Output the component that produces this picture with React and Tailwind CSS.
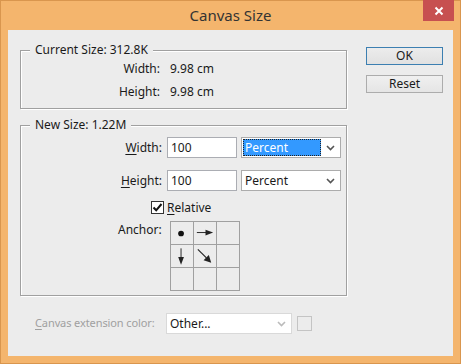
import React from 'react';

function Chevron({ color = '#555' }) {
  return (
    <svg width="9" height="6" viewBox="0 0 9 6" className="shrink-0">
      <path d="M1 1 L4.5 4.5 L8 1" fill="none" stroke={color} strokeWidth="1.6" />
    </svg>
  );
}

function Select({ value, focused, disabled }) {
  return (
    <div
      className={`h-[21px] flex items-center bg-white border ${
        disabled ? 'border-[#d9d9d9] w-[126px]' : 'border-[#acacac] w-[100px]'
      }`}
    >
      {focused ? (
        <div className="ml-[1px] h-[17px] w-[78px] bg-[#3399ff] text-white flex items-center pl-[2px] outline outline-1 outline-dotted outline-[#222] -outline-offset-1">
          {value}
        </div>
      ) : (
        <div className="flex-1 pl-[3px] text-[#1a1a1a]">{value}</div>
      )}
      <div className="ml-auto mr-[5px] flex items-center">
        <Chevron color={disabled ? '#bbb' : '#555'} />
      </div>
    </div>
  );
}

function Arrow({ dir }) {
  if (dir === 'dot') {
    return (
      <svg width="23" height="23" viewBox="0 0 23 23">
        <circle cx="10.5" cy="11.5" r="3" fill="#111" />
      </svg>
    );
  }
  if (dir === 'right') {
    return (
      <svg width="23" height="23" viewBox="0 0 23 23">
        <line x1="3" y1="10.5" x2="14" y2="10.5" stroke="#222" strokeWidth="1" />
        <polygon points="12,7.5 20,10.5 12,13.5" fill="#222" />
      </svg>
    );
  }
  if (dir === 'down') {
    return (
      <svg width="23" height="23" viewBox="0 0 23 23">
        <line x1="10.5" y1="3" x2="10.5" y2="14" stroke="#222" strokeWidth="1" />
        <polygon points="7.5,12 10.5,20 13.5,12" fill="#222" />
      </svg>
    );
  }
  return (
    <svg width="23" height="23" viewBox="0 0 23 23">
      <line x1="4" y1="4" x2="13" y2="13" stroke="#222" strokeWidth="1.2" />
      <polygon points="10,15.5 18,18 15.5,10" fill="#222" />
    </svg>
  );
}

export default function App() {
  const anchor = ['dot', 'right', null, 'down', 'diag', null, null, null, null];

  return (
    <div className="w-[461px] h-[364px] bg-[#f4b56d] border border-[#d9964e] flex flex-col font-['Noto_Sans',sans-serif] text-[12px] text-[#1a1a1a]">
      {/* Title bar */}
      <div className="relative h-[29px] shrink-0 flex items-center justify-center">
        <span className="text-[15px] text-[#333]">Canvas Size</span>
        <div className="absolute right-[6px] -top-[1px] w-[31px] h-[21px] bg-[#c75050] flex items-center justify-center">
          <svg width="10" height="10" viewBox="0 0 10 10">
            <path d="M1.5 1.5 L8.5 8.5 M8.5 1.5 L1.5 8.5" stroke="#fff" strokeWidth="2" />
          </svg>
        </div>
      </div>

      {/* Client area */}
      <div className="mx-[7px] mb-[7px] flex-1 bg-[#ececec] flex flex-col">
        <div className="flex">
          {/* Left column */}
          <div className="pl-[12px] pt-[20px] w-[339px] flex flex-col">
            {/* Current size */}
            <div className="relative w-[327px] h-[59px] border border-[#a0a0a0] shadow-[1px_1px_0_#fff,inset_1px_1px_0_#fff] pt-[8px] flex flex-col gap-[3px]">
              <span className="absolute -top-[10px] left-[9px] px-[5px] bg-[#ececec] leading-[18px]">
                Current Size: 312.8K
              </span>
              <div className="flex h-[20px] items-center">
                <span className="w-[139px] text-right">Width:</span>
                <span className="ml-[10px]">9.98 cm</span>
              </div>
              <div className="flex h-[20px] items-center">
                <span className="w-[139px] text-right">Height:</span>
                <span className="ml-[10px]">9.98 cm</span>
              </div>
            </div>

            {/* New size */}
            <div className="relative mt-[16px] w-[327px] h-[171px] border border-[#a0a0a0] shadow-[1px_1px_0_#fff,inset_1px_1px_0_#fff] pt-[11px] flex flex-col">
              <span className="absolute -top-[10px] left-[9px] px-[5px] bg-[#ececec] leading-[18px]">
                New Size: 1.22M
              </span>
              <div className="flex h-[21px] items-center">
                <span className="w-[141px] text-right">
                  <span className="underline underline-offset-2">W</span>idth:
                </span>
                <div className="ml-[5px] w-[70px] h-[21px] bg-white border border-[#abadb3] flex items-center pl-[3px]">
                  100
                </div>
                <div className="ml-[4px]">
                  <Select value="Percent" focused />
                </div>
              </div>
              <div className="flex h-[21px] items-center mt-[12px]">
                <span className="w-[141px] text-right">
                  <span className="underline underline-offset-2">H</span>eight:
                </span>
                <div className="ml-[5px] w-[70px] h-[21px] bg-white border border-[#abadb3] flex items-center pl-[3px]">
                  100
                </div>
                <div className="ml-[4px]">
                  <Select value="Percent" />
                </div>
              </div>
              <div className="flex items-center mt-[10px] h-[13px]">
                <div className="ml-[130px] w-[13px] h-[13px] bg-white border border-[#333] flex items-center justify-center">
                  <svg width="11" height="11" viewBox="0 0 11 11">
                    <path d="M1.5 5.5 L4.2 8.3 L9.5 2" fill="none" stroke="#111" strokeWidth="2" />
                  </svg>
                </div>
                <span className="ml-[3px]">
                  <span className="underline underline-offset-2">R</span>elative
                </span>
              </div>
              <div className="flex mt-[7px]">
                <span className="ml-[97px] w-[52px] pt-[1px] leading-[16px]">Anchor:</span>
                <div className="grid grid-cols-[repeat(3,23px)] border-l border-t border-[#a0a0a0]">
                  {anchor.map((a, i) => (
                    <div key={i} className="w-[23px] h-[23px] border-r border-b border-[#a0a0a0] flex items-center justify-center">
                      {a && <Arrow dir={a} />}
                    </div>
                  ))}
                </div>
              </div>
            </div>
          </div>

          {/* Right column: buttons */}
          <div className="pl-[19px] pt-[17px] flex flex-col gap-[10px]">
            <div className="w-[77px] h-[18px] border border-[#3c7fb1] bg-[linear-gradient(#ececec,#e1e1e1)] flex items-center justify-center leading-none">
              OK
            </div>
            <div className="w-[77px] h-[18px] border border-[#acacac] bg-[linear-gradient(#f0f0f0,#e5e5e5)] flex items-center justify-center leading-none">
              Reset
            </div>
          </div>
        </div>

        {/* Canvas extension color */}
        <div className="flex items-center mt-[17px] pl-[27px]">
          <span className="w-[131px] shrink-0 whitespace-nowrap text-[11px] tracking-[-0.1px] text-[#a0a0a0]">
            <span className="underline underline-offset-2">C</span>anvas extension color:
          </span>
          <Select value="Other..." disabled />
          <div className="ml-[5px] w-[15px] h-[15px] border border-[#c4c4c4] bg-[#ececec]" />
        </div>
      </div>
    </div>
  );
}
